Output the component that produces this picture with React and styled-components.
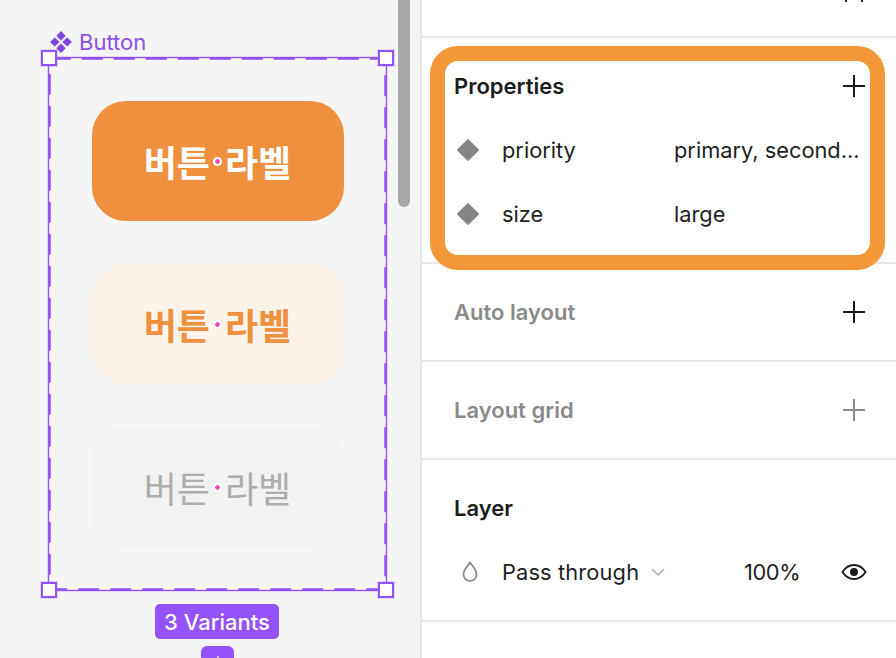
import React from "react";
import styled, { createGlobalStyle } from "styled-components";

const Global = createGlobalStyle`
  html, body { margin: 0; padding: 0; width: 896px; height: 658px; overflow: hidden; background: #fff; }
  body { font-family: Inter, "Liberation Sans", sans-serif; }
`;

const Page = styled.div`
  display: flex;
  width: 896px;
  height: 658px;
  overflow: hidden;
`;

const Canvas = styled.div`
  position: relative;
  flex: 0 0 420px;
  height: 658px;
  background: #f5f5f5;
  overflow: hidden;
`;

const ScrollThumb = styled.div`
  position: absolute;
  left: 398px;
  top: -10px;
  width: 12px;
  height: 217px;
  border-radius: 6px;
  background: #a9a9a9;
`;

const FrameLabel = styled.div`
  position: absolute;
  left: 50px;
  top: 30px;
  display: flex;
  align-items: center;
  gap: 7px;
  color: #8a50e6;
  font-size: 22px;
  line-height: 24px;
`;

const Frame = styled.div`
  position: absolute;
  left: 49px;
  top: 58px;
  width: 337px;
  height: 532px;
  box-sizing: border-box;
  display: flex;
  flex-direction: column;
  align-items: center;
  gap: 43px;
  padding-top: 43px;
`;

const Outline = styled.svg`
  position: absolute;
  left: -2px;
  top: -2px;
  width: 341px;
  height: 536px;
  overflow: visible;
`;

const Handle = styled.span`
  position: absolute;
  width: 12px;
  height: 12px;
  border: 2px solid #9452fb;
  background: #fff;
  box-shadow: 0 0 0 1px rgba(148, 82, 251, 0.2);
  left: ${(p) => (p.$right ? "329px" : "-8px")};
  top: ${(p) => (p.$bottom ? "524px" : "-8px")};
`;

const tones = {
  primary: { bg: "#ee903e", fg: "#ffffff", weight: 700 },
  secondary: { bg: "#fdf3e8", fg: "#ee903e", weight: 700 },
  disabled: { bg: "#f2f2f2", fg: "#adadad", weight: 400 },
};

const VariantButton = styled.div`
  width: 252px;
  height: 120px;
  flex: none;
  border-radius: 34px;
  display: flex;
  align-items: center;
  justify-content: center;
  gap: 3px;
  background: ${(p) => tones[p.$tone].bg};
  color: ${(p) => tones[p.$tone].fg};
  font-family: "Noto Sans CJK KR", sans-serif;
  font-weight: ${(p) => tones[p.$tone].weight};
  font-size: 36px;
  line-height: 40px;
`;

const MarkerSvg = styled.svg`
  display: block;
  width: 9px;
  height: 9px;
  margin-top: 1px;
`;

const VariantsPill = styled.div`
  position: absolute;
  left: 155px;
  top: 604px;
  width: 124px;
  height: 35px;
  border-radius: 5px;
  background: #9452fb;
  color: #fff;
  font-size: 22px;
  font-weight: 500;
  display: flex;
  align-items: center;
  justify-content: center;
`;

const AddPill = styled.div`
  position: absolute;
  left: 201px;
  top: 646px;
  width: 33px;
  height: 33px;
  border-radius: 6px;
  background: #9452fb;
  color: #fff;
  display: flex;
  align-items: center;
  justify-content: center;
`;

const Panel = styled.div`
  flex: 1;
  border-left: 2px solid #e6e6e6;
  background: #fff;
  color: #1c1c1c;
`;

const Section = styled.section`
  position: relative;
  box-sizing: border-box;
  height: ${(p) => p.$h}px;
  border-bottom: 2px solid #e6e6e6;
  padding: 0 31px 0 32px;
`;

const TopStub = styled.div`
  display: flex;
  justify-content: flex-end;
  height: 2px;
  overflow: hidden;
  padding-right: 2px;
`;

const SectionHead = styled.div`
  display: flex;
  align-items: center;
  justify-content: space-between;
  height: 24px;
  padding-top: 36px;
  padding-right: 2px;
  font-size: 22px;
  font-weight: 600;
  color: ${(p) => (p.$muted ? "#8a8a8a" : "#1c1c1c")};
`;

const Highlight = styled.div`
  position: absolute;
  left: 8px;
  top: 8px;
  width: 455px;
  height: 224px;
  box-sizing: border-box;
  border: 15px solid #f29838;
  border-radius: 28px;
  pointer-events: none;
`;

const PropRow = styled.div`
  display: grid;
  grid-template-columns: 48px 172px 1fr;
  align-items: center;
  height: 64px;
  font-size: 21.8px;
  color: #1f1f1f;
  margin-top: ${(p) => p.$top || 0}px;
`;

const PropGlyph = styled.span`
  display: block;
  width: 16px;
  height: 16px;
  margin-left: 6px;
  background: #858585;
  transform: rotate(45deg);
  border-radius: 1px;
`;

const PropValue = styled.span`
  display: block;
  white-space: nowrap;
`;

const LayerRow = styled.div`
  display: flex;
  align-items: center;
  height: 32px;
  margin-top: 36px;
  font-size: 21.8px;
  color: #1f1f1f;
`;

const BlendIcon = styled.svg`
  width: 18px;
  height: 22px;
  margin: 0 23px 0 7px;
  color: #858585;
`;

const BlendName = styled.span`
  width: 149px;
  white-space: nowrap;
  letter-spacing: 0.15px;
`;

const Opacity = styled.span`
  margin-left: 79px;
  width: 97px;
  letter-spacing: -0.4px;
`;

const Plus = ({ color = "#1c1c1c", size = 22 }) => (
  <svg width={size} height={size} viewBox="0 0 22 22" fill="none" style={{ display: "block" }}>
    <path d="M11 0V22M0 11H22" stroke={color} strokeWidth="2" />
  </svg>
);

const ComponentSet = () => (
  <svg width="22" height="22" viewBox="0 0 22 22" fill="#7e44e2" style={{ display: "block" }}>
    <path d="M11 0 15.6 4.8 11 9.6 6.4 4.8Z" />
    <path d="M11 12.4 15.6 17.2 11 22 6.4 17.2Z" />
    <path d="M4.8 6.4 9.6 11 4.8 15.6 0 11Z" />
    <path d="M17.2 6.4 22 11 17.2 15.6 12.4 11Z" />
  </svg>
);

const Marker = () => (
  <MarkerSvg viewBox="0 0 9 9">
    <circle cx="4.5" cy="4.5" r="4.5" fill="#fff" />
    <path d="M4.5 2V7M2 4.5H7" stroke="#f23fb4" strokeWidth="2.2" />
  </MarkerSvg>
);

const Label = () => (
  <>
    <span>버튼</span>
    <Marker />
    <span>라벨</span>
  </>
);

export default function App() {
  return (
    <Page>
      <Global />
      <Canvas>
        <ScrollThumb />
        <FrameLabel>
          <ComponentSet />
          Button
        </FrameLabel>
        <Frame>
          <Outline viewBox="0 0 341 536" fill="none">
            <rect x="1.5" y="1.5" width="338" height="533" stroke="#9452fb" strokeWidth="1.4" />
            <rect x="2.75" y="2.75" width="335.5" height="530.5" stroke="#9452fb" strokeWidth="2" strokeDasharray="21 11" />
          </Outline>
          <VariantButton $tone="primary"><Label /></VariantButton>
          <VariantButton $tone="secondary"><Label /></VariantButton>
          <VariantButton $tone="disabled"><Label /></VariantButton>
          <Handle />
          <Handle $right />
          <Handle $bottom />
          <Handle $right $bottom />
        </Frame>
        <VariantsPill>3 Variants</VariantsPill>
        <AddPill><Plus color="#fff" size={14} /></AddPill>
      </Canvas>
      <Panel>
        <Section $h={38}>
          <TopStub>
            <svg width="22" height="2" viewBox="0 0 22 2" style={{ display: "block" }}>
              <path d="M3 0V2M19 0V2" stroke="#1c1c1c" strokeWidth="2" />
            </svg>
          </TopStub>
        </Section>
        <Section $h={226}>
          <SectionHead>
            Properties
            <Plus />
          </SectionHead>
          <PropRow $top={20}>
            <PropGlyph />
            <span>priority</span>
            <PropValue>primary, second...</PropValue>
          </PropRow>
          <PropRow>
            <PropGlyph />
            <span>size</span>
            <PropValue>large</PropValue>
          </PropRow>
          <Highlight />
        </Section>
        <Section $h={98}>
          <SectionHead $muted>
            Auto layout
            <Plus />
          </SectionHead>
        </Section>
        <Section $h={98}>
          <SectionHead $muted>
            Layout grid
            <Plus color="#8a8a8a" />
          </SectionHead>
        </Section>
        <Section $h={162}>
          <SectionHead>Layer</SectionHead>
          <LayerRow>
            <BlendIcon viewBox="0 0 18 22" fill="none">
              <path d="M9 1.5C11.5 5.5 15.5 8.5 15.5 13.5A6.5 6.5 0 0 1 2.5 13.5C2.5 8.5 6.5 5.5 9 1.5Z" stroke="currentColor" strokeWidth="1.7" />
            </BlendIcon>
            <BlendName>Pass through</BlendName>
            <svg width="14" height="8" viewBox="0 0 14 8" fill="none" style={{ display: "block" }}>
              <path d="M1 1 7 7 13 1" stroke="#b3b3b3" strokeWidth="1.6" />
            </svg>
            <Opacity>100%</Opacity>
            <svg width="26" height="18" viewBox="0 0 26 18" fill="none" style={{ display: "block" }}>
              <path d="M1.5 9C4.5 4.2 8.5 2 13 2S21.5 4.2 24.5 9C21.5 13.8 17.5 16 13 16S4.5 13.8 1.5 9Z" stroke="#1c1c1c" strokeWidth="1.8" />
              <circle cx="13" cy="9" r="4" fill="#1c1c1c" />
            </svg>
          </LayerRow>
        </Section>
      </Panel>
    </Page>
  );
}
